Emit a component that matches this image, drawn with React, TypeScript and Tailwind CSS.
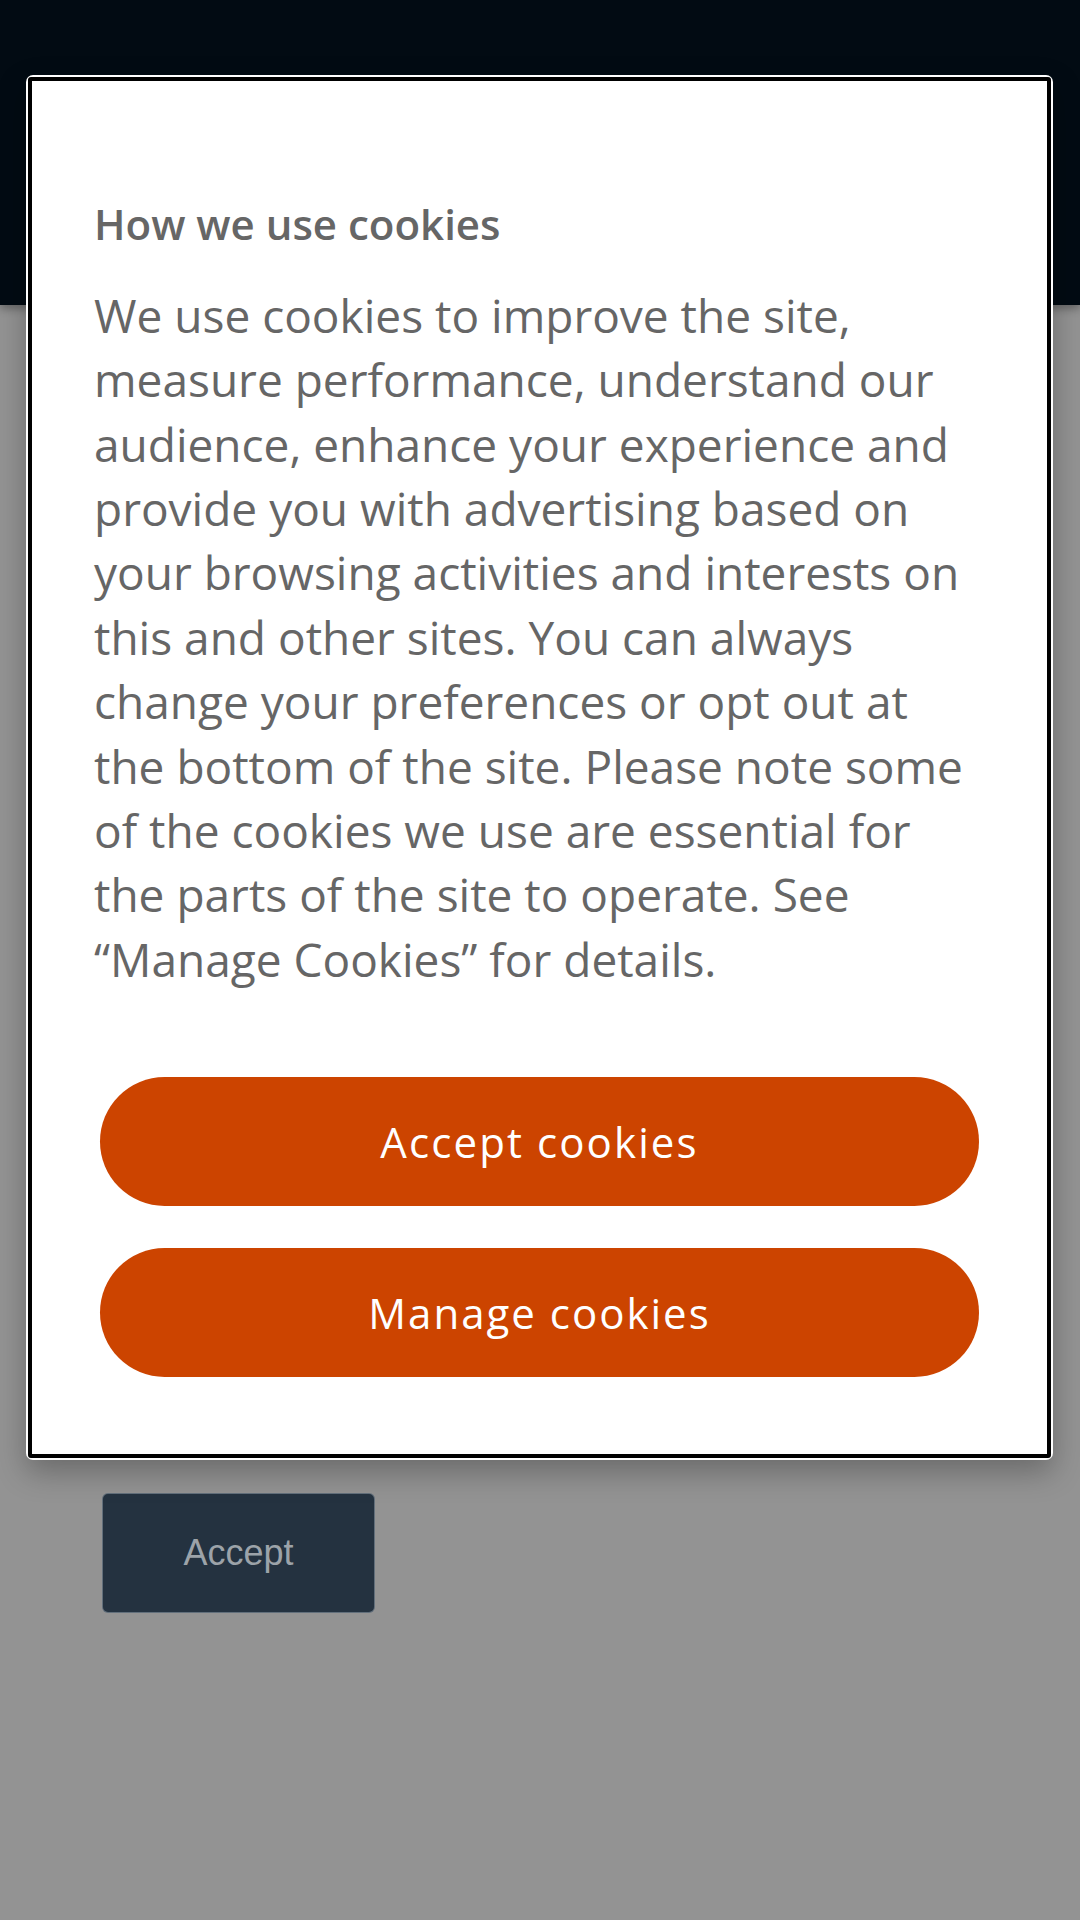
export default function App() {
  return (
    <div className="relative w-[1080px] h-[1920px] overflow-hidden bg-[#939393] font-['Open_Sans',sans-serif]">
      {/* page behind the overlay */}
      <header className="h-[305px] bg-[#020b13] shadow-[0_4px_8px_rgba(0,0,0,0.3)]" />
      <main className="pl-[102px] pt-[1188px]">
        <button className="w-[273px] h-[120px] rounded-[6px] bg-[#243240] border border-[#8c98a3]/60 text-[#9ca3a9] text-[36px] font-['Liberation_Sans',Arial,sans-serif]">
          Accept
        </button>
      </main>

      {/* cookie dialog */}
      <div className="absolute left-[26px] top-[75px] w-[1027px] rounded-[7px] bg-white p-[2px] shadow-[0_12px_30px_rgba(0,0,0,0.28)]">
        <div className="flex flex-col rounded-[3px] border-[4px] border-black px-[62px] pt-[114px] pb-[77px]">
          <h2 className="text-[42px] leading-[1.4] font-semibold text-[#666666]">How we use cookies</h2>
          <p className="mt-[29px] text-[46px] leading-[1.4] text-[#666666]">
            We use cookies to improve the site, measure performance, understand our audience, enhance your
            experience and provide you with advertising based on your browsing activities and interests on this
            and other sites. You can always change your preferences or opt out at the bottom of the site. Please
            note some of the cookies we use are essential for the parts of the site to operate. See “Manage
            Cookies” for details.
          </p>
          <div className="mx-[6px] mt-[86px] flex flex-col gap-[42px]">
            <button className="h-[129px] rounded-full bg-[#cc4400] text-[42px] tracking-[2.1px] text-white">
              Accept cookies
            </button>
            <button className="h-[129px] rounded-full bg-[#cc4400] text-[42px] tracking-[2px] text-white">
              Manage cookies
            </button>
          </div>
        </div>
      </div>
    </div>
  );
}
